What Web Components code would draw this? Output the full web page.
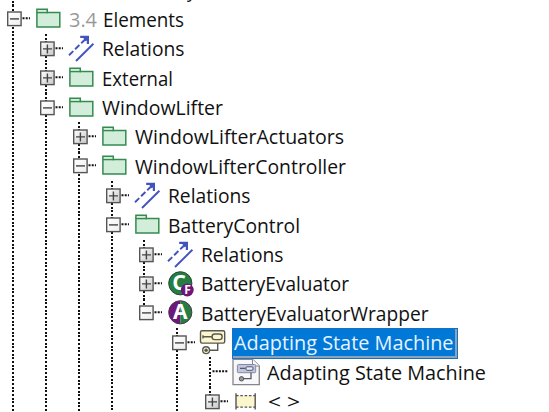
<!DOCTYPE html>
<html lang="en"><head><meta charset="utf-8"><title>Model tree</title>
<style>
body{margin:0;width:549px;height:412px;overflow:hidden;background:#fff;color:#111;font:19.6px/20px "Open Sans","Noto Sans",sans-serif}
</style></head><body>
<tree-view>
 <tree-node icon="none" state="none" label="y" w="9"></tree-node>
 <tree-node icon="folder" state="open" num="3.4" label="Elements" w="81" more>
  <tree-node icon="relation" state="closed" label="Relations" w="82.5" more></tree-node>
  <tree-node icon="folder" state="closed" label="External" w="71" more></tree-node>
  <tree-node icon="folder" state="open" label="WindowLifter" w="121" more>
   <tree-node icon="folder" state="closed" label="WindowLifterActuators" w="209" more></tree-node>
   <tree-node icon="folder" state="open" label="WindowLifterController" w="211" more>
    <tree-node icon="relation" state="closed" label="Relations" w="82.5" more></tree-node>
    <tree-node icon="folder" state="open" label="BatteryControl" w="132" more>
     <tree-node icon="relation" state="closed" label="Relations" w="82.5" more></tree-node>
     <tree-node icon="classf" state="closed" label="BatteryEvaluator" w="148" more></tree-node>
     <tree-node icon="actor" state="open" label="BatteryEvaluatorWrapper" w="227.5">
      <tree-node icon="machine" state="open" label="Adapting State Machine" w="219.5" selected more>
       <tree-node icon="diagram" state="leaf" label="Adapting State Machine" w="219" more></tree-node>
       <tree-node icon="region" state="closed" label="&lt; &gt;" w="32"></tree-node>
      </tree-node>
     </tree-node>
    </tree-node>
   </tree-node>
  </tree-node>
 </tree-node>
</tree-view>
<script>
class TreeView extends HTMLElement{
  constructor(){super();this.attachShadow({mode:'open'}).innerHTML=`<style>
  :host{display:block;margin-top:-24.8px;padding-left:7.3px;height:437px;overflow:hidden}</style><slot></slot>`;}
}
// Icons are drawn on a 28x28 grid centred on the row.
const ICONS={
none:'',
folder:`<path d="M.9 22.1V4.3H11.3V7.6H23.8V22.1Z" fill="#d3eddb" stroke="#358a50" stroke-width="1.5"/><path d="M.9 7.6H12" stroke="#358a50" stroke-width="1.4"/>`,
relation:`<g stroke="#4353bd" stroke-width="1.9" fill="none"><path d="M0 20.3L15.5 5" stroke-dasharray="6 2.6"/><path d="M7 26L24.4 8.8"/></g><path d="M11.2 .7H20V9H17.8V5.6L15.6 6.6 14.6 3H11.2Z" fill="#4353bd"/>`,
classf:`<circle cx="12.3" cy="13.3" r="11.6" fill="#247e43" stroke="#26472f" stroke-width="1"/><text x="4.3" y="20.4" font-size="21.5" font-weight="700" fill="#fff">C</text><circle cx="19.3" cy="20" r="6.4" fill="#72127b"/><text x="16.2" y="24.4" font-size="12" font-weight="700" fill="#fff">F</text>`,
actor:`<path d="M12.3 1.7a11.6 11.6 0 0 0 0 23.2z" fill="#6e1679"/><path d="M12.3 1.7a11.6 11.6 0 0 1 0 23.2z" fill="#247e43"/><circle cx="12.3" cy="13.3" r="11.6" fill="none" stroke="#4b3650"/><text x="5" y="20" font-size="21" font-weight="700" fill="#fff">A</text>`,
machine:`<g fill="none" stroke="#595850" stroke-width="1.4"><rect x="-.5" y="1.7" width="24.2" height="12.4" rx="1.5" fill="#fbf6cf"/><rect x="11.1" y="5" width="10" height="5.6" rx="2.6"/><path d="M1.5 7.8H11.1M2 6.2v3.2M16.7 14.1V21.2H8"/><circle cx="5.1" cy="21.2" r="3.4" fill="#fbf6cf"/></g><circle cx="5.1" cy="21.2" r="1.7" fill="#595850"/>`,
diagram:`<path d="M-1 1.3H18.5L25.3 8V26.6H-1Z" fill="#f8f8fa" stroke="#85858c" stroke-width="1.3"/><path d="M18.5 1.3V8H25.3" fill="#fff" stroke="#85858c"/><rect x="3.4" y="6.5" width="18.3" height="8.2" rx="1" fill="#c1c6df" stroke="#8589a0"/><path d="M6 10.3h5.5M17 14.7v6H9" stroke="#55596d" stroke-width="1.3" fill="none"/><rect x="12" y="8.8" width="7" height="3.5" rx="1" fill="#e9ecf7" stroke="#50556f"/><circle cx="7.5" cy="20.8" r="2.2" fill="#999" stroke="#555"/>`,
region:`<rect x="2" y="8" width="19" height="11" fill="#fcf6cc"/><path d="M2 7.7H21M2 19.1H21" stroke="#555" stroke-width="1.2" stroke-dasharray="2.6 1.7"/><path d="M2 5.3V21.5M21.2 5.3V21.5" stroke="#555" stroke-width="1.4"/>`
};
class TreeNode extends HTMLElement{
  constructor(){super();this.attachShadow({mode:'open'});}
  connectedCallback(){
    const a=n=>this.getAttribute(n),st=a('state'),sel=this.hasAttribute('selected'),root=this.parentElement.localName==='tree-view';
    const box=st==='open'||st==='closed';
    this.shadowRoot.innerHTML=`<style>
    :host{display:block;background:repeating-linear-gradient(#111 0 2px,#fff 2px 3.67px) 4.6px 0/2px ${this.hasAttribute('more')||root?'100%':'14px'} no-repeat}
    .row{display:flex;height:29.42px;align-items:center}
    .toggle{flex:none;width:29px;display:flex;align-items:center}
    .toggle svg{display:block}
    .icon{flex:none;width:33px;height:28px;font-family:"Open Sans",sans-serif}
    .icon svg{display:block;overflow:visible}
    .label{flex:none;white-space:pre;margin-top:1px}
    .label span{display:inline-block;transform-origin:0 50%}
    .num{color:#999}
    .sel{box-sizing:border-box;height:30.6px;width:226.6px;margin:2px 0 0 -2px;padding-left:1px;background:#0078d7;color:#e8f3ff;border:1px solid #1b6fc0;box-shadow:inset -2px -2px #8fa3b8;line-height:28px}
    .kids{padding-left:32.88px}
    </style><div class="row"><div class="toggle"><svg width="29" height="16" viewBox="0 0 29 16">
    ${box?`<path d="M15.5 7.3H23" stroke="#111" stroke-width="2" stroke-dasharray="2 1.2"/><defs><linearGradient id="g" x1="0" y1="0" x2="1" y2="1"><stop offset="0" stop-color="#fff"/><stop offset="1" stop-color="${st==='open'?'#eee':'#c8c8c8'}"/></linearGradient></defs><rect x=".7" y="1" width="13.4" height="13.6" fill="url(#g)" stroke="#555" stroke-width="1.4"/><path d="M3 7.9H12${st==='closed'?'M7.4 3.4V12.4':''}" stroke="#444" stroke-width="1.4"/>`:st==='leaf'?'<path d="M7.5 7.3H22.5" stroke="#111" stroke-width="2" stroke-dasharray="2 1.2"/>':''}
    </svg></div><div class="icon"><svg width="28" height="28" viewBox="0 0 28 28">${ICONS[a('icon')]}</svg></div>
    <div class="label ${sel?'sel':''}">${a('num')?`<span class="num" data-w="28">${a('num')}</span>`:''}<span class="text" data-w="${a('w')}"></span></div></div><div class="kids"><slot></slot></div>`;
    const r=this.shadowRoot,l=r.querySelector('.label');
    r.querySelector('.text').textContent=a('label');
    if(a('icon')==='none') l.style.marginLeft='117.7px';
    if(a('icon')==='region'){l.style.marginLeft='1.2px';l.style.marginTop='0';}
    r.querySelectorAll('[data-w]').forEach(s=>{const w=+s.dataset.w,n=s.getBoundingClientRect().width;s.style.transform=`scaleX(${w/n})`;s.style.marginRight=(w-n+(s.className==='num'?5.5:0))+'px';});
  }
}
customElements.define('tree-view',TreeView);
customElements.define('tree-node',TreeNode);
</script></body></html>
